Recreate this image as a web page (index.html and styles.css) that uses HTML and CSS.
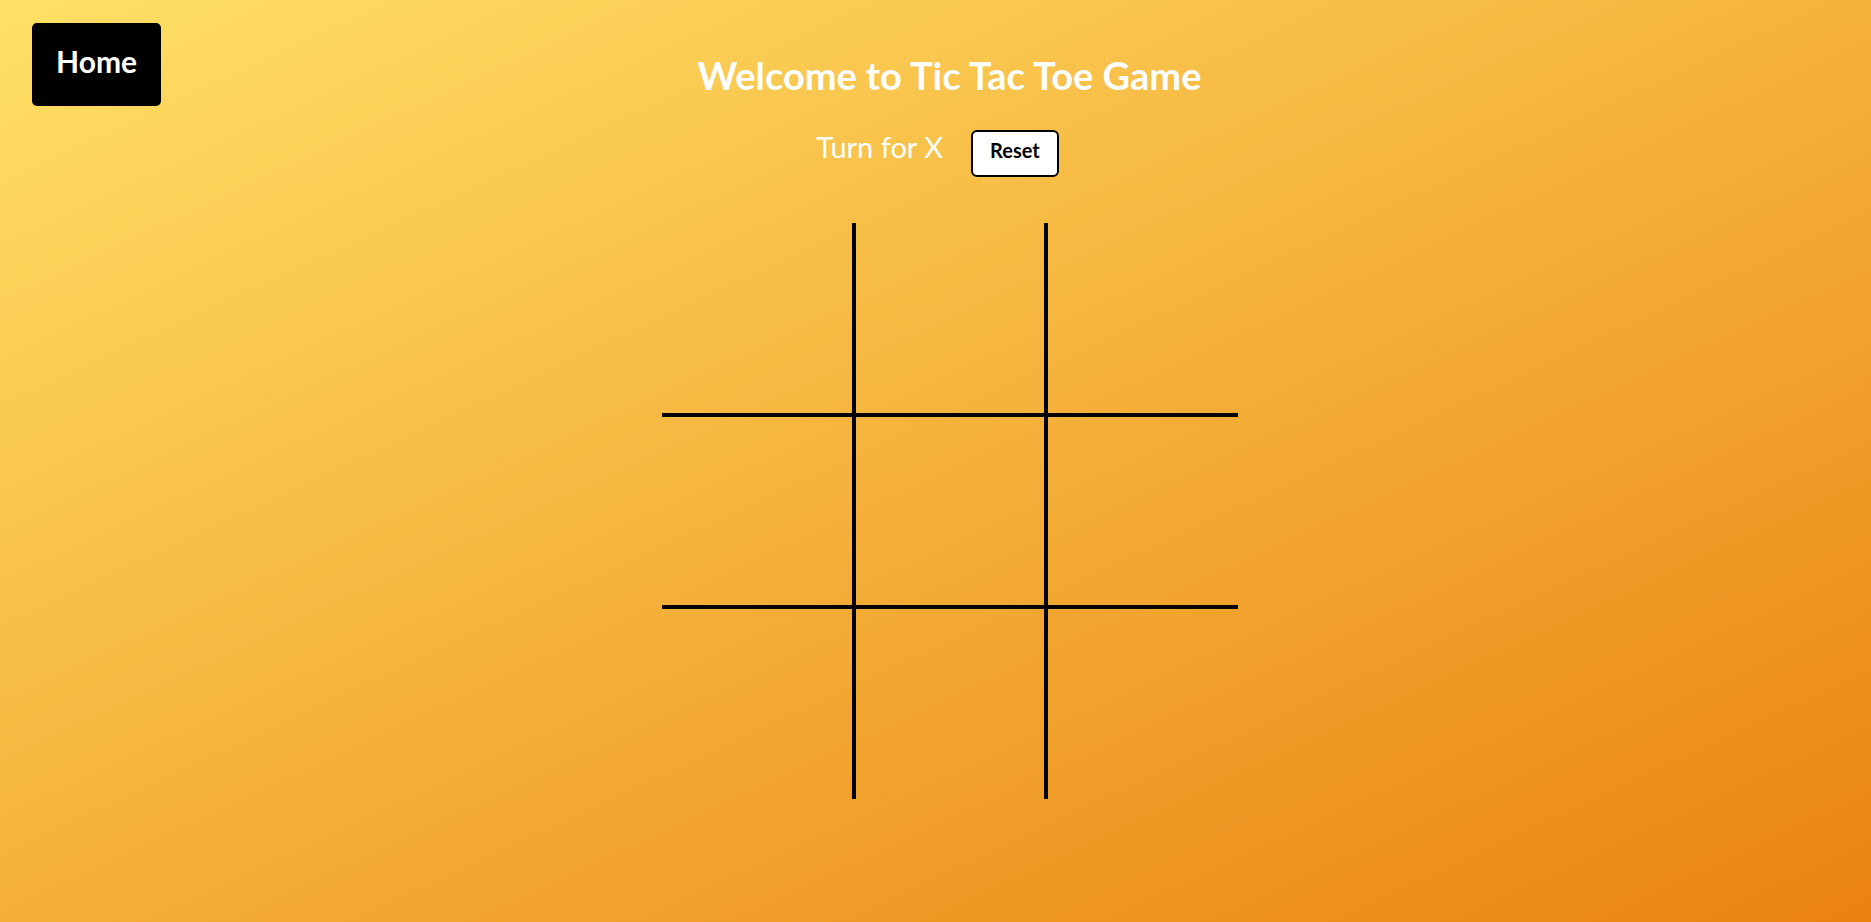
FILE: index.html
```html
<!DOCTYPE html>
<html lang="en">
<head>
  <meta charset="utf-8">
  <meta name="viewport" content="width=device-width, initial-scale=1">
  <title>Tic Tac Toe</title>
  <link rel="stylesheet" href="styles.css">
</head>
<body class="page">
  <nav class="nav">
    <a class="home" href="#">Home</a>
  </nav>
  <main class="game">
    <h1 class="title">Welcome to Tic Tac Toe Game</h1>
    <div class="status">
      <span class="turn">Turn for X</span>
      <button class="reset" type="button">Reset</button>
    </div>
    <div class="board">
      <button class="cell" type="button" aria-label="Row 1, column 1"></button>
      <button class="cell" type="button" aria-label="Row 1, column 2"></button>
      <button class="cell" type="button" aria-label="Row 1, column 3"></button>
      <button class="cell" type="button" aria-label="Row 2, column 1"></button>
      <button class="cell" type="button" aria-label="Row 2, column 2"></button>
      <button class="cell" type="button" aria-label="Row 2, column 3"></button>
      <button class="cell" type="button" aria-label="Row 3, column 1"></button>
      <button class="cell" type="button" aria-label="Row 3, column 2"></button>
      <button class="cell" type="button" aria-label="Row 3, column 3"></button>
    </div>
  </main>
</body>
</html>
```

FILE: styles.css
```css
* {
  box-sizing: border-box;
}

.page {
  margin: 0;
  min-height: 100vh;
  display: grid;
  grid-template-columns: 1fr auto 1fr;
  padding-left: 28px;
  background: linear-gradient(155deg, #ffe066, #ea8210);
  font-family: Lato, "Open Sans", sans-serif;
  color: #fff;
}

.nav {
  padding: 23px 4px;
}

.home {
  display: inline-block;
  padding: 20px 24px 27px;
  border-radius: 5px;
  background: #000;
  color: #fff;
  font-size: 30px;
  font-weight: 700;
  line-height: 36px;
  text-decoration: none;
}

.game {
  display: flex;
  flex-direction: column;
  align-items: center;
  padding-top: 51px;
}

.title {
  margin: 0;
  font-size: 38px;
  font-weight: 700;
  line-height: 48px;
}

.status {
  display: flex;
  align-items: baseline;
  gap: 28px;
  margin-top: 30px;
  padding-right: 24px;
}

.turn {
  font-size: 29px;
  line-height: 36px;
}

.reset {
  padding: 8px 17px 15px;
  border: 2px solid #000;
  border-radius: 6px;
  background: #fff;
  color: #000;
  font-family: inherit;
  font-size: 20px;
  font-weight: 700;
  line-height: 20px;
}

.board {
  display: grid;
  grid-template-columns: repeat(3, 192px);
  grid-auto-rows: 192px;
  margin-top: 46px;
}

.cell {
  padding: 0;
  border: 0 solid #000;
  background: none;
}

.cell:not(:nth-child(3n)) {
  border-right-width: 2px;
}

.cell:not(:nth-child(3n + 1)) {
  border-left-width: 2px;
}

.cell:nth-child(-n + 6) {
  border-bottom-width: 2px;
}

.cell:nth-child(n + 4) {
  border-top-width: 2px;
}
```
